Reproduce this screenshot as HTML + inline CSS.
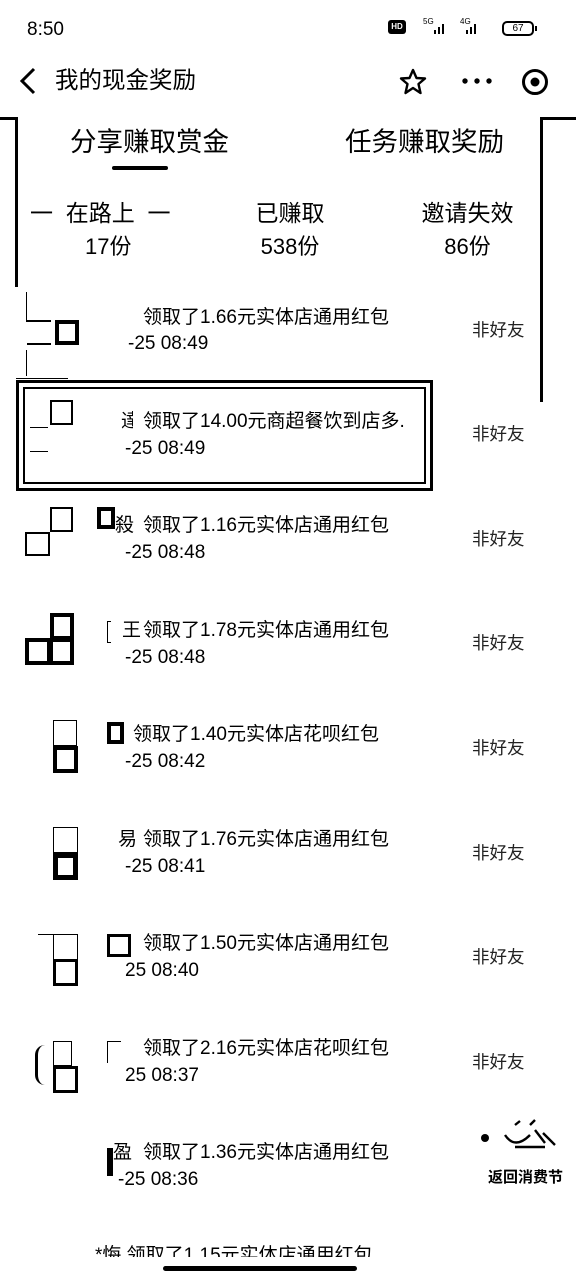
<!DOCTYPE html>
<html><head><meta charset="utf-8"><style>
*{margin:0;padding:0;box-sizing:border-box}
body{width:576px;height:1280px;background:#fff;position:relative;overflow:hidden;font-family:"Liberation Sans","Noto Sans CJK SC",sans-serif;color:#000}
.a{position:absolute}
.b{position:absolute;border:2px solid #000}
.t1{position:absolute;left:143px;font-size:19px;line-height:22px;white-space:nowrap}
.p{position:absolute;font-size:19px;line-height:22px;white-space:nowrap}
.t2{position:absolute;font-size:19px;line-height:22px;white-space:nowrap}
.nf{position:absolute;left:472px;font-size:17.5px;color:#222;line-height:20px}
</style></head><body>
<div class="a" style="left:27px;top:19px;font-size:19px">8:50</div>
<div class="a" style="left:388px;top:20px;width:18px;height:14px;background:#000;border-radius:3px;color:#fff;font-size:8px;font-weight:bold;line-height:14px;text-align:center">HD</div>
<div class="a" style="left:423px;top:17px;font-size:8px">5G</div>
<div class="a" style="left:460px;top:17px;font-size:8px">4G</div>
<svg class="a" style="left:430px;top:20px" width="70" height="16"><rect x="4" y="10" width="2" height="4"/><rect x="8" y="7" width="2" height="7"/><rect x="12" y="4" width="2" height="10"/><rect x="36" y="10" width="2" height="4"/><rect x="40" y="7" width="2" height="7"/><rect x="44" y="4" width="2" height="10"/></svg>
<div class="a" style="left:502px;top:21px;width:32px;height:15px;border:2px solid #000;border-radius:5px;font-size:10px;line-height:11px;text-align:center">67</div>
<div class="a" style="left:535px;top:26px;width:2px;height:5px;background:#000"></div>

<svg class="a" style="left:16px;top:66px" width="24" height="30"><path d="M18 3 L6 15 L18 27" fill="none" stroke="#000" stroke-width="3"/></svg>
<div class="a" style="left:55px;top:65px;font-size:23.5px;line-height:30px">我的现金奖励</div>
<svg class="a" style="left:398px;top:67px" width="30" height="30"><path d="M15 3 L18.5 11 L27 11.5 L20.5 17 L22.5 26 L15 21 L7.5 26 L9.5 17 L3 11.5 L11.5 11 Z" fill="none" stroke="#000" stroke-width="2.4" stroke-linejoin="round"/></svg>
<svg class="a" style="left:460px;top:76px" width="34" height="10"><circle cx="5" cy="5" r="2.7"/><circle cx="17" cy="5" r="2.7"/><circle cx="29" cy="5" r="2.7"/></svg>
<svg class="a" style="left:520px;top:67px" width="30" height="30"><circle cx="15" cy="15" r="11.5" fill="none" stroke="#000" stroke-width="3"/><circle cx="15" cy="15" r="4.5"/></svg>

<div class="a" style="left:0;top:117px;width:17px;height:3px;background:#000"></div>
<div class="a" style="left:15px;top:117px;width:3px;height:170px;background:#000"></div>
<div class="a" style="left:540px;top:117px;width:36px;height:3px;background:#000"></div>
<div class="a" style="left:540px;top:117px;width:3px;height:285px;background:#000"></div>

<div class="a" style="left:70px;top:126px;font-size:26.5px;line-height:32px">分享赚取赏金</div>
<div class="a" style="left:112px;top:166px;width:56px;height:4px;background:#000;border-radius:2px"></div>
<div class="a" style="left:345px;top:126px;font-size:26.5px;line-height:32px">任务赚取奖励</div>

<div class="a" style="left:30px;top:199px;font-size:23px;line-height:28px">一 &nbsp;在路上 &nbsp;一</div>
<div class="a" style="left:85px;top:233px;font-size:22px;line-height:28px">17份</div>
<div class="a" style="left:230px;top:199px;font-size:23px;line-height:28px;width:120px;text-align:center">已赚取</div>
<div class="a" style="left:230px;top:233px;font-size:22px;line-height:28px;width:120px;text-align:center">538份</div>
<div class="a" style="left:405px;top:199px;font-size:23px;line-height:28px;width:125px;text-align:center">邀请失效</div>
<div class="a" style="left:405px;top:233px;font-size:22px;line-height:28px;width:125px;text-align:center">86份</div>

<!-- row1 -->
<div class="a" style="left:26px;top:292px;width:1px;height:30px;background:#000"></div>
<div class="a" style="left:26px;top:350px;width:1px;height:26px;background:#000"></div>
<div class="a" style="left:27px;top:320px;width:24px;height:2px;background:#000"></div>
<div class="a" style="left:27px;top:343px;width:24px;height:2px;background:#000"></div>
<div class="b" style="left:55px;top:320px;width:24px;height:25px;border-width:4px"></div>
<div class="a" style="left:16px;top:378px;width:52px;height:1px;background:#000"></div>
<div class="t1" style="top:307px">领取了1.66元实体店通用红包</div>
<div class="t2" style="left:128px;top:333px">-25 08:49</div>
<div class="nf" style="top:320px">非好友</div>

<!-- row2 -->
<div class="b" style="left:16px;top:380px;width:417px;height:111px;border-width:3px"></div>
<div class="b" style="left:23px;top:387px;width:403px;height:97px;border-width:2px"></div>
<div class="b" style="left:50px;top:400px;width:23px;height:25px"></div>
<div class="a" style="left:30px;top:427px;width:18px;height:1px;background:#000"></div>
<div class="a" style="left:30px;top:451px;width:18px;height:1px;background:#000"></div>
<div class="p" style="left:121px;top:411px;width:12px;overflow:hidden">達</div>
<div class="t1" style="top:411px">领取了14.00元商超餐饮到店多.</div>
<div class="t2" style="left:125px;top:438px">-25 08:49</div>
<div class="nf" style="top:424px">非好友</div>

<!-- row3 -->
<div class="b" style="left:50px;top:507px;width:23px;height:25px"></div>
<div class="b" style="left:25px;top:532px;width:25px;height:24px"></div>
<div class="b" style="left:97px;top:507px;width:18px;height:22px;border-width:4px"></div>
<div class="p" style="left:115px;top:515px">殺</div>
<div class="t1" style="top:515px">领取了1.16元实体店通用红包</div>
<div class="t2" style="left:125px;top:542px">-25 08:48</div>
<div class="nf" style="top:529px">非好友</div>

<!-- row4 -->
<div class="b" style="left:50px;top:613px;width:24px;height:27px;border-width:4px"></div>
<div class="b" style="left:25px;top:638px;width:26px;height:27px;border-width:4px"></div>
<div class="b" style="left:49px;top:638px;width:25px;height:27px;border-width:4px"></div>
<div class="a" style="left:107px;top:621px;width:4px;height:22px;border-left:1px solid #000;border-top:1px solid #000;border-bottom:1px solid #000"></div>
<div class="p" style="left:122px;top:620px">王</div>
<div class="t1" style="top:620px">领取了1.78元实体店通用红包</div>
<div class="t2" style="left:125px;top:647px">-25 08:48</div>
<div class="nf" style="top:633px">非好友</div>

<!-- row5 -->
<div class="b" style="left:53px;top:720px;width:24px;height:26px;border-width:1px"></div>
<div class="b" style="left:53px;top:746px;width:25px;height:27px;border-width:4px"></div>
<div class="b" style="left:107px;top:722px;width:17px;height:22px;border-width:4px"></div>
<div class="t1" style="left:133px;top:724px">领取了1.40元实体店花呗红包</div>
<div class="t2" style="left:125px;top:751px">-25 08:42</div>
<div class="nf" style="top:738px">非好友</div>

<!-- row6 -->
<div class="b" style="left:53px;top:827px;width:25px;height:26px;border-width:1px"></div>
<div class="b" style="left:53px;top:853px;width:25px;height:27px;border-width:5px"></div>
<div class="p" style="left:118px;top:829px">易</div>
<div class="t1" style="top:829px">领取了1.76元实体店通用红包</div>
<div class="t2" style="left:125px;top:856px">-25 08:41</div>
<div class="nf" style="top:843px">非好友</div>

<!-- row7 -->
<div class="b" style="left:53px;top:934px;width:25px;height:26px;border-width:1px"></div>
<div class="b" style="left:53px;top:959px;width:25px;height:27px;border-width:3px"></div>
<div class="a" style="left:38px;top:934px;width:16px;height:1px;background:#000"></div>
<div class="b" style="left:107px;top:934px;width:24px;height:23px;border-width:3px"></div>
<div class="t1" style="top:933px">领取了1.50元实体店通用红包</div>
<div class="t2" style="left:125px;top:960px">25 08:40</div>
<div class="nf" style="top:947px">非好友</div>

<!-- row8 -->
<div class="b" style="left:53px;top:1041px;width:19px;height:25px;border-width:1px"></div>
<div class="b" style="left:53px;top:1066px;width:25px;height:27px;border-width:3px"></div>
<div class="a" style="left:35px;top:1045px;width:10px;height:40px;border-left:3px solid #000;border-radius:10px 0 0 10px"></div>
<div class="a" style="left:107px;top:1041px;width:14px;height:22px;border-left:1px solid #000;border-top:1px solid #000"></div>
<div class="t1" style="top:1038px">领取了2.16元实体店花呗红包</div>
<div class="t2" style="left:125px;top:1065px">25 08:37</div>
<div class="nf" style="top:1052px">非好友</div>

<!-- row9 -->
<div class="a" style="left:107px;top:1148px;width:6px;height:28px;background:#000"></div>
<div class="p" style="left:113px;top:1142px">盈</div>
<div class="t1" style="top:1142px">领取了1.36元实体店通用红包</div>
<div class="t2" style="left:118px;top:1169px">-25 08:36</div>
<svg class="a" style="left:475px;top:1115px" width="90" height="40"><circle cx="10" cy="23" r="4"/><path d="M30 20 Q40 35 55 20 M40 10 L45 6 M55 10 L60 5 M60 15 L70 28 M68 18 L80 30 M40 32 L70 32" fill="none" stroke="#000" stroke-width="2.4"/></svg>
<div class="a" style="left:488px;top:1168px;font-size:15px;font-weight:bold;line-height:20px">返回消费节</div>

<div class="a" style="left:95px;top:1245px;font-size:19px;line-height:22px;height:12px;overflow:hidden;white-space:nowrap">*悔 领取了1.15元实体店通用红包</div>
<div class="a" style="left:163px;top:1266px;width:194px;height:5px;background:#000;border-radius:3px"></div>
</body></html>
